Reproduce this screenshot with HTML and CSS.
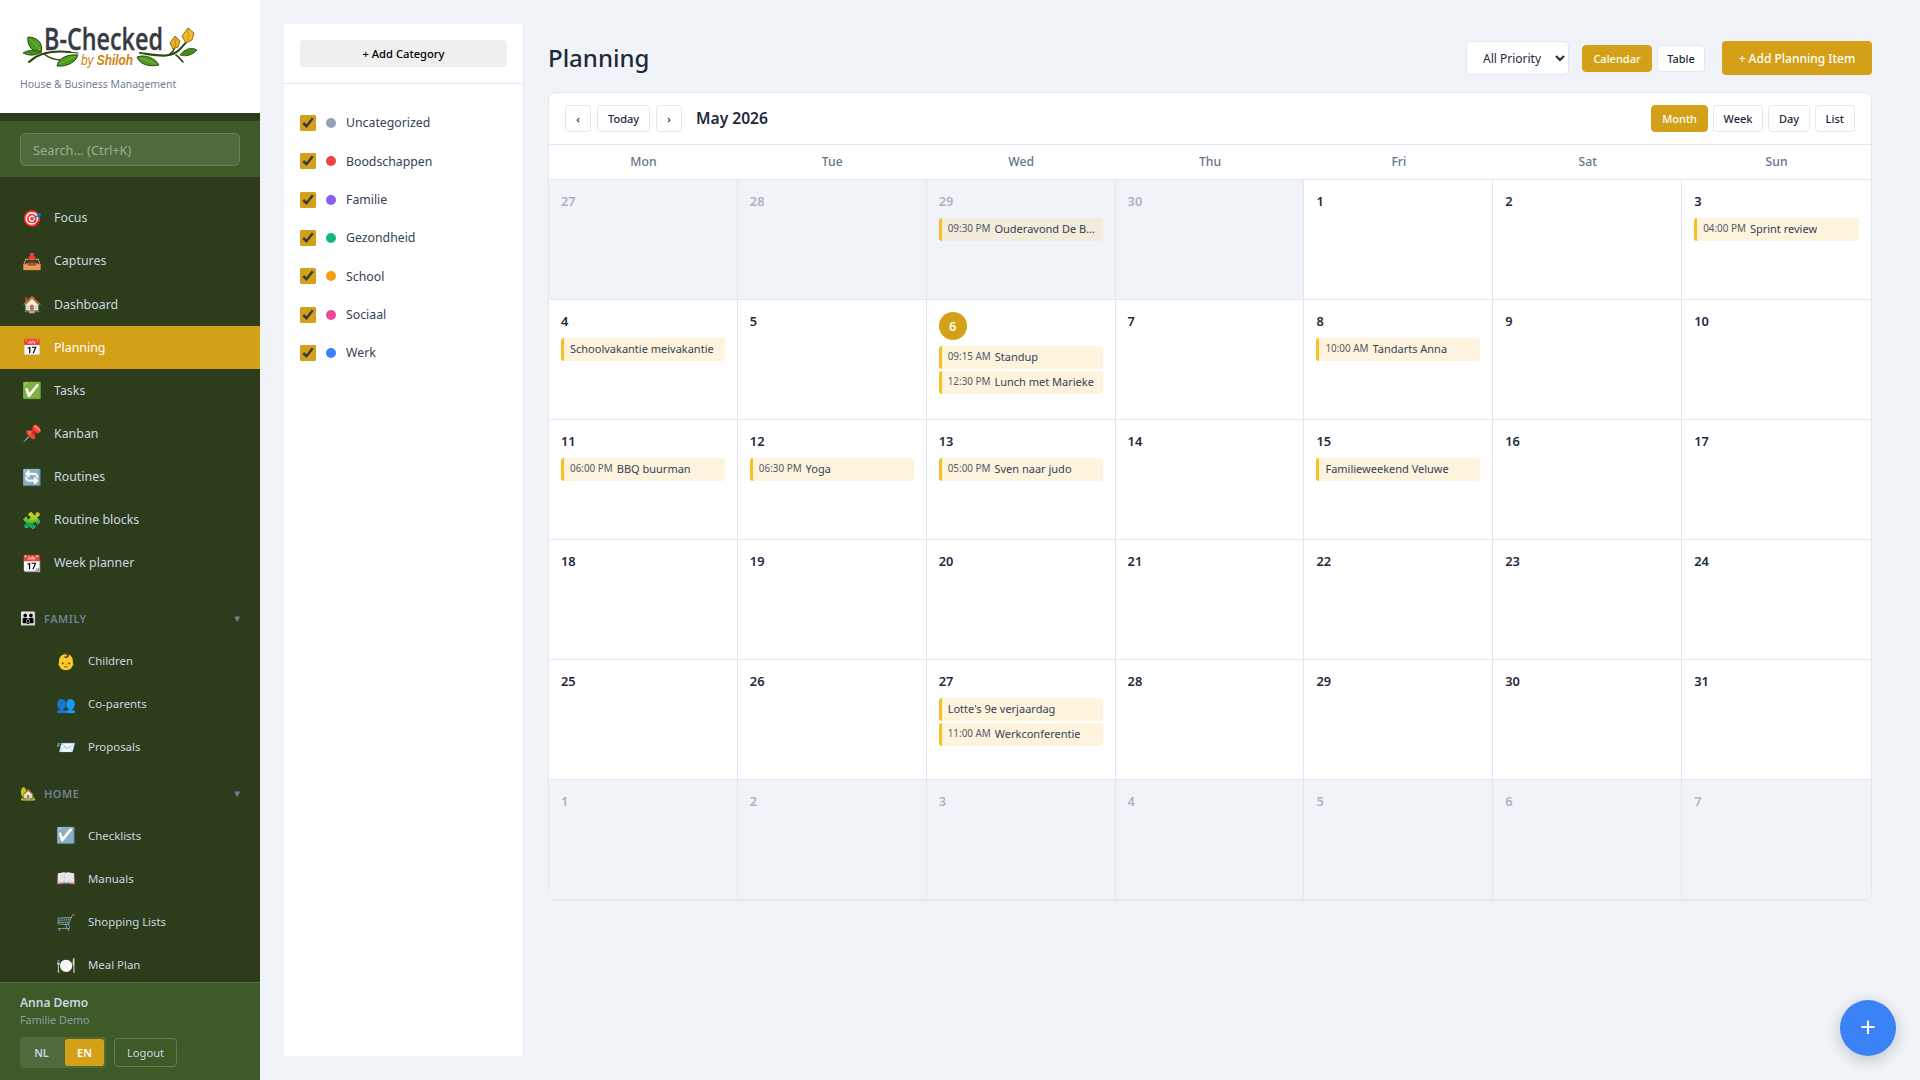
FILE: index.html
```html
<!DOCTYPE html>
<html lang="en">
<head>
<meta charset="utf-8">
<title>Planning</title>
<link rel="stylesheet" href="styles.css">
</head>
<body>
<div class="app">
  <aside class="sidebar">
    <div class="brand">
      <svg class="logo" viewBox="20 24 180 48" width="180" height="48" role="img" aria-label="B-Checked by Shiloh">
        <g fill="none" stroke="#2c4a12" stroke-linecap="round">
          <path d="M29 62C38 53 52 50 70 52" stroke-width="2"/>
          <path d="M44 54C49 58 54 60 62 60" stroke-width="1.6"/>
          <path d="M140 53C155 55 170 59 179 50C183 46 185 44 187 41" stroke-width="2.2"/>
          <path d="M170 54C173 52 174 50 175 47" stroke-width="1.6"/>
          <path d="M176 55C179 57 181 60 183 62" stroke-width="1.6"/>
          <path d="M66 52L78 53" stroke-width="1.2"/>
        </g>
        <path d="M41 53C30 52 27 43 28 37C36 37 44 42 41 53Z" fill="#4f9a1f" stroke="#244a0e" stroke-width="1"/>
        <path d="M23 53C29 49 36 50 41 52C36 56 29 56 23 53Z" fill="#44891c" stroke="#244a0e" stroke-width=".8"/>
        <path d="M57 66C58 58 68 54 78 55C76 62 67 67 57 66Z" fill="#4f9a1f" stroke="#244a0e" stroke-width="1"/>
        <path d="M137 57C145 54 155 58 159 65C150 67 140 65 137 57Z" fill="#4f9a1f" stroke="#244a0e" stroke-width="1"/>
        <path d="M180 55C185 48 192 47 197 50C193 55 186 57 180 55Z" fill="#44891c" stroke="#244a0e" stroke-width=".8"/>
        <g fill="none" stroke="#a5d36a" stroke-width=".5">
          <path d="M30 39C34 43 38 47 40 51"/>
          <path d="M60 64C66 60 71 58 76 56"/>
          <path d="M140 58C146 60 151 62 156 64"/>
        </g>
        <path d="M175 36L180 41L178 47L173 49L170 43Z" fill="#e8b122" stroke="#8a5c08" stroke-width=".9"/>
        <path d="M188 28L194 33L192 40L186 43L182 36Z" fill="#f0bd2a" stroke="#8a5c08" stroke-width=".9"/>
        <path d="M188 29L188 42M176 37L175 48" stroke="#a87a0c" stroke-width=".6" fill="none"/>
        <text class="logo-main" x="44" y="50" textLength="119" lengthAdjust="spacingAndGlyphs">B-Checked</text>
        <text class="logo-sub" x="81" y="65" textLength="52" lengthAdjust="spacingAndGlyphs"><tspan class="logo-by">by</tspan> Shiloh</text>
      </svg>
      <div class="tagline">House &amp; Business Management</div>
    </div>
    <div class="search-band">
      <input class="search" type="text" placeholder="Search... (Ctrl+K)">
    </div>
    <nav class="nav">
      <div class="nav-main">
        <a class="nav-item"><span class="nav-icon">🎯</span><span>Focus</span></a>
        <a class="nav-item"><span class="nav-icon">📥</span><span>Captures</span></a>
        <a class="nav-item"><span class="nav-icon">🏠</span><span>Dashboard</span></a>
        <a class="nav-item active"><span class="nav-icon">📅</span><span>Planning</span></a>
        <a class="nav-item"><span class="nav-icon">✅</span><span>Tasks</span></a>
        <a class="nav-item"><span class="nav-icon">📌</span><span>Kanban</span></a>
        <a class="nav-item"><span class="nav-icon">🔄</span><span>Routines</span></a>
        <a class="nav-item"><span class="nav-icon">🧩</span><span>Routine blocks</span></a>
        <a class="nav-item"><span class="nav-icon">📆</span><span>Week planner</span></a>
      </div>
      <div class="nav-group">
        <div class="group-head"><span class="group-icon">👪</span><span class="group-name">Family</span><span class="group-caret">▼</span></div>
        <a class="sub-item"><span class="sub-icon">👶</span><span>Children</span></a>
        <a class="sub-item"><span class="sub-icon">👥</span><span>Co-parents</span></a>
        <a class="sub-item"><span class="sub-icon">📨</span><span>Proposals</span></a>
      </div>
      <div class="nav-group">
        <div class="group-head"><span class="group-icon">🏡</span><span class="group-name">Home</span><span class="group-caret">▼</span></div>
        <a class="sub-item"><span class="sub-icon">☑️</span><span>Checklists</span></a>
        <a class="sub-item"><span class="sub-icon">📖</span><span>Manuals</span></a>
        <a class="sub-item"><span class="sub-icon">🛒</span><span>Shopping Lists</span></a>
        <a class="sub-item"><span class="sub-icon">🍽️</span><span>Meal Plan</span></a>
      </div>
    </nav>
    <div class="user">
      <div class="user-name">Anna Demo</div>
      <div class="user-org">Familie Demo</div>
      <div class="user-actions">
        <div class="lang"><span class="lang-opt">NL</span><span class="lang-opt on">EN</span></div>
        <button class="logout">Logout</button>
      </div>
    </div>
  </aside>

  <section class="cat-panel">
    <div class="cat-top"><button class="cat-add">+ Add Category</button></div>
    <ul class="cat-list">
      <li class="cat"><input type="checkbox" class="cat-check" checked><span class="dot d-grey"></span><span>Uncategorized</span></li>
      <li class="cat"><input type="checkbox" class="cat-check" checked><span class="dot d-red"></span><span>Boodschappen</span></li>
      <li class="cat"><input type="checkbox" class="cat-check" checked><span class="dot d-purple"></span><span>Familie</span></li>
      <li class="cat"><input type="checkbox" class="cat-check" checked><span class="dot d-green"></span><span>Gezondheid</span></li>
      <li class="cat"><input type="checkbox" class="cat-check" checked><span class="dot d-amber"></span><span>School</span></li>
      <li class="cat"><input type="checkbox" class="cat-check" checked><span class="dot d-pink"></span><span>Sociaal</span></li>
      <li class="cat"><input type="checkbox" class="cat-check" checked><span class="dot d-blue"></span><span>Werk</span></li>
    </ul>
  </section>

  <main class="main">
    <header class="page-head">
      <h1 class="page-title">Planning</h1>
      <div class="page-actions">
        <select class="priority"><option>All Priority</option></select>
        <div class="view-switch">
          <button class="btn-sm primary">Calendar</button>
          <button class="btn-sm">Table</button>
        </div>
        <button class="btn-add">+ Add Planning Item</button>
      </div>
    </header>

    <div class="calendar">
      <div class="cal-bar">
        <div class="cal-nav">
          <button class="btn-cal arrow">‹</button>
          <button class="btn-cal">Today</button>
          <button class="btn-cal arrow">›</button>
          <h2 class="cal-title">May 2026</h2>
        </div>
        <div class="cal-views">
          <button class="btn-cal on">Month</button>
          <button class="btn-cal">Week</button>
          <button class="btn-cal">Day</button>
          <button class="btn-cal">List</button>
        </div>
      </div>
      <div class="cal-head">
        <div>Mon</div><div>Tue</div><div>Wed</div><div>Thu</div><div>Fri</div><div>Sat</div><div>Sun</div>
      </div>
      <div class="cal-grid">
        <div class="day out"><div class="num">27</div></div>
        <div class="day out"><div class="num">28</div></div>
        <div class="day out"><div class="num">29</div><div class="ev"><span class="ev-time">09:30 PM</span><span class="ev-name">Ouderavond De Bron</span></div></div>
        <div class="day out"><div class="num">30</div></div>
        <div class="day"><div class="num">1</div></div>
        <div class="day"><div class="num">2</div></div>
        <div class="day"><div class="num">3</div><div class="ev"><span class="ev-time">04:00 PM</span><span class="ev-name">Sprint review</span></div></div>

        <div class="day"><div class="num">4</div><div class="ev"><span class="ev-name">Schoolvakantie meivakantie</span></div></div>
        <div class="day"><div class="num">5</div></div>
        <div class="day"><div class="num today">6</div><div class="ev"><span class="ev-time">09:15 AM</span><span class="ev-name">Standup</span></div><div class="ev"><span class="ev-time">12:30 PM</span><span class="ev-name">Lunch met Marieke</span></div></div>
        <div class="day"><div class="num">7</div></div>
        <div class="day"><div class="num">8</div><div class="ev"><span class="ev-time">10:00 AM</span><span class="ev-name">Tandarts Anna</span></div></div>
        <div class="day"><div class="num">9</div></div>
        <div class="day"><div class="num">10</div></div>

        <div class="day"><div class="num">11</div><div class="ev"><span class="ev-time">06:00 PM</span><span class="ev-name">BBQ buurman</span></div></div>
        <div class="day"><div class="num">12</div><div class="ev"><span class="ev-time">06:30 PM</span><span class="ev-name">Yoga</span></div></div>
        <div class="day"><div class="num">13</div><div class="ev"><span class="ev-time">05:00 PM</span><span class="ev-name">Sven naar judo</span></div></div>
        <div class="day"><div class="num">14</div></div>
        <div class="day"><div class="num">15</div><div class="ev"><span class="ev-name">Familieweekend Veluwe</span></div></div>
        <div class="day"><div class="num">16</div></div>
        <div class="day"><div class="num">17</div></div>

        <div class="day"><div class="num">18</div></div>
        <div class="day"><div class="num">19</div></div>
        <div class="day"><div class="num">20</div></div>
        <div class="day"><div class="num">21</div></div>
        <div class="day"><div class="num">22</div></div>
        <div class="day"><div class="num">23</div></div>
        <div class="day"><div class="num">24</div></div>

        <div class="day"><div class="num">25</div></div>
        <div class="day"><div class="num">26</div></div>
        <div class="day"><div class="num">27</div><div class="ev"><span class="ev-name">Lotte's 9e verjaardag</span></div><div class="ev"><span class="ev-time">11:00 AM</span><span class="ev-name">Werkconferentie</span></div></div>
        <div class="day"><div class="num">28</div></div>
        <div class="day"><div class="num">29</div></div>
        <div class="day"><div class="num">30</div></div>
        <div class="day"><div class="num">31</div></div>

        <div class="day out"><div class="num">1</div></div>
        <div class="day out"><div class="num">2</div></div>
        <div class="day out"><div class="num">3</div></div>
        <div class="day out"><div class="num">4</div></div>
        <div class="day out"><div class="num">5</div></div>
        <div class="day out"><div class="num">6</div></div>
        <div class="day out"><div class="num">7</div></div>
      </div>
    </div>
  </main>
</div>
<button class="fab">+</button>
</body>
</html>
```

FILE: styles.css
```css
* { box-sizing: border-box; }
html, body { margin: 0; height: 100%; }
body {
  font-family: "Noto Sans", "Noto Color Emoji", sans-serif;
  font-size: 14px;
  color: #1e293b;
  background: #f0f4f9;
  overflow: hidden;
}
button, input, select { font-family: inherit; }
.app { display: flex; height: 1080px; }

/* Sidebar */
.sidebar {
  width: 260px;
  flex: none;
  display: flex;
  flex-direction: column;
  background: #2d3d1b;
  overflow: hidden;
}
.brand { height: 113px; background: #fff; padding: 24px 20px 0; flex: none; }
.logo { display: block; }
.logo-main { font-family: "Open Sans", sans-serif; font-size: 30px; font-weight: 600; fill: #363b43; stroke: #363b43; stroke-width: .3px; }
.logo-sub { font-family: "Liberation Sans", sans-serif; font-size: 15px; font-weight: 700; font-style: italic; fill: #cf8408; }
.logo-by { font-weight: 400; }
.tagline { margin-top: 3px; font-size: 10.45px; line-height: 18px; color: #718096; }
.search-band {
  margin-top: 8px;
  flex: none;
  height: 56px;
  background: #3d5a27;
  padding: 12px 20px 11px;
}
.search {
  width: 220px;
  height: 33px;
  display: block;
  padding: 0 12px;
  font-size: 12.8px;
  color: #fff;
  background: rgba(255,255,255,.1);
  border: 1px solid rgba(255,255,255,.15);
  border-radius: 6px;
  outline: none;
}
.search::placeholder { color: rgba(255,255,255,.45); }
.nav { flex: 1; min-height: 0; overflow: hidden; padding-top: 19.3px; }
.nav-main { margin-bottom: 14.7px; }
.nav-item {
  height: 43.12px;
  display: flex;
  align-items: center;
  padding-left: 20px;
  font-size: 12.4px;
  color: #cbd5e1;
}
.nav-item.active { background: #d4a017; color: #fff; }
.nav-icon { width: 34px; flex: none; padding-left: 2px; font-size: 16px; line-height: 1; }
.nav-group { margin-top: 5.5px; }
.group-head {
  height: 40px;
  display: flex;
  align-items: center;
  padding: 0 18px 0 20px;
  font-size: 11px;
  font-weight: 600;
  color: #718096;
  letter-spacing: .5px;
}
.group-icon { width: 24px; flex: none; font-size: 13px; line-height: 1; }
.group-name { flex: 1; text-transform: uppercase; }
.group-caret { font-size: 9.5px; letter-spacing: 0; }
.sub-item {
  height: 43.12px;
  display: flex;
  align-items: center;
  padding-left: 56px;
  font-size: 11.4px;
  color: #cbd5e1;
}
.sub-icon { width: 32px; flex: none; font-size: 16px; line-height: 1; }
.user {
  flex: none;
  height: 98px;
  background: #3d5a27;
  border-top: 1px solid rgba(255,255,255,.12);
  padding: 11px 20px 0;
}
.user-name { font-size: 12px; font-weight: 600; line-height: 18px; color: #cbd5e1; }
.user-org { font-size: 10.8px; line-height: 16px; color: #8aa0a8; }
.user-actions { display: flex; align-items: center; gap: 8px; margin-top: 9px; }
.lang {
  display: flex;
  width: 86px;
  height: 31px;
  padding: 2px;
  border-radius: 4px;
  background: rgba(255,255,255,.1);
}
.lang-opt {
  width: 39px;
  display: flex;
  align-items: center;
  justify-content: center;
  font-size: 11px;
  font-weight: 600;
  color: #cbd5e1;
}
.lang-opt.on { margin-left: auto; background: #d4a017; color: #fff; border-radius: 3px; }
.logout {
  width: 63px;
  height: 29px;
  padding: 0;
  font-size: 11.2px;
  color: #cbd5e1;
  background: transparent;
  border: 1px solid rgba(255,255,255,.2);
  border-radius: 4px;
}

/* Category panel */
.cat-panel {
  width: 240px;
  flex: none;
  margin: 24px 0 24px 24px;
  background: #fff;
  border-right: 1px solid #e2e8f0;
}
.cat-top { height: 60px; padding: 16px 16px 0; border-bottom: 1px solid #e2e8f0; }
.cat-add {
  display: block;
  width: 207px;
  height: 27px;
  padding: 0;
  font-size: 11.2px;
  font-weight: 500;
  color: #000;
  background: #efefef;
  border: 0;
  border-radius: 4px;
}
.cat-list { list-style: none; margin: 0; padding: 19.8px 16px 0; }
.cat {
  height: 38.33px;
  display: flex;
  align-items: center;
  font-size: 12.3px;
  color: #334155;
}
.cat-check { width: 16px; height: 16px; margin: 0 10px 0 0; accent-color: #d4a017; }
.dot { width: 10px; height: 10px; border-radius: 50%; margin-right: 10px; }
.d-grey { background: #94a3b8; }
.d-red { background: #ef4444; }
.d-purple { background: #8b5cf6; }
.d-green { background: #10b981; }
.d-amber { background: #f59e0b; }
.d-pink { background: #ec4899; }
.d-blue { background: #3b82f6; }

/* Main */
.main { flex: 1; min-width: 0; padding: 41px 48px 0 24px; }
.page-head { display: flex; align-items: center; justify-content: space-between; height: 34px; margin-bottom: 17px; }
.page-title { margin: 0; font-size: 24px; font-weight: 500; line-height: 34px; color: #1e293b; }
.page-actions { display: flex; align-items: center; }
.priority {
  width: 103px;
  height: 34px;
  padding: 0 0 0 12px;
  font-size: 12px;
  color: #1e293b;
  background: #fff;
  border: 1px solid #e2e8f0;
  border-radius: 4px;
  margin-right: 13px;
}
.view-switch { display: flex; gap: 5px; margin-right: 17px; }
.btn-sm {
  height: 27px;
  width: 48px;
  padding: 0;
  font-size: 11px;
  font-weight: 500;
  color: #1e293b;
  background: #fff;
  border: 1px solid #e2e8f0;
  border-radius: 4px;
}
.btn-sm.primary { width: 70px; background: #d4a017; border-color: #d4a017; color: #fff; }
.btn-add {
  width: 150px;
  height: 34px;
  padding: 0;
  font-size: 12px;
  font-weight: 500;
  color: #fff;
  background: #d4a017;
  border: 0;
  border-radius: 4px;
}

/* Calendar */
.calendar {
  height: 809px;
  background: #fff;
  border: 1px solid #e2e8f0;
  border-radius: 8px;
  overflow: hidden;
}
.cal-bar {
  height: 52px;
  display: flex;
  align-items: center;
  justify-content: space-between;
  padding: 0 16px;
  border-bottom: 1px solid #e2e8f0;
}
.cal-nav, .cal-views { display: flex; align-items: center; }
.cal-nav { gap: 6px; }
.cal-views { gap: 4.5px; }
.btn-cal {
  height: 27px;
  padding: 0 10px;
  font-size: 11px;
  font-weight: 500;
  color: #1e293b;
  background: #fff;
  border: 1px solid #e2e8f0;
  border-radius: 4px;
}
.btn-cal.arrow { width: 26px; padding: 0; }
.btn-cal.on { background: #d4a017; border-color: #d4a017; color: #fff; }
.cal-title { margin: -1px 0 0 8px; font-size: 15.6px; font-weight: 600; line-height: 22px; color: #1e293b; }
.cal-head {
  height: 35px;
  padding-bottom: 1px;
  display: grid;
  grid-template-columns: repeat(7, 1fr);
  align-items: center;
  text-align: center;
  font-size: 12.16px;
  font-weight: 500;
  color: #64748b;
  border-bottom: 1px solid #e2e8f0;
}
.cal-grid { display: grid; grid-template-columns: repeat(7, 1fr); grid-auto-rows: 120px; }
.day {
  padding: 12px;
  border-right: 1px solid #e2e8f0;
  border-bottom: 1px solid #e2e8f0;
  min-width: 0;
}
.day:nth-child(7n) { border-right: 0; }
.day.out { background: #f0f4f9; }
.num {
  height: 20px;
  margin-bottom: 6px;
  font-size: 12.8px;
  font-weight: 600;
  line-height: 18px;
  color: #1e293b;
}
.day.out .num { color: #a9b3c2; }
.num.today {
  width: 28px;
  height: 28px;
  border-radius: 50%;
  background: #d4a017;
  color: #fff;
  text-align: center;
  line-height: 28px;
}
.ev {
  height: 22.5px;
  margin-bottom: 2.5px;
  display: flex;
  align-items: center;
  gap: 4px;
  padding: 0 6px;
  font-size: 11px;
  line-height: 16px;
  color: #334155;
  background: #fef4de;
  border-left: 3px solid #fbbf24;
  border-radius: 3px;
  white-space: nowrap;
  overflow: hidden;
}
.day.out .ev { background: #f3ecdc; }
.ev-time { flex: none; font-size: 9.9px; margin-top: -2px; opacity: .85; }
.ev-name { overflow: hidden; text-overflow: ellipsis; min-width: 0; }

.fab {
  position: fixed;
  right: 24px;
  bottom: 24px;
  width: 56px;
  height: 56px;
  padding: 0 0 4px;
  font-size: 28px;
  font-weight: 400;
  line-height: 1;
  color: #fff;
  background: #3b82f6;
  border: 0;
  border-radius: 50%;
  box-shadow: 0 4px 16px rgba(0,0,0,.2);
}
```
